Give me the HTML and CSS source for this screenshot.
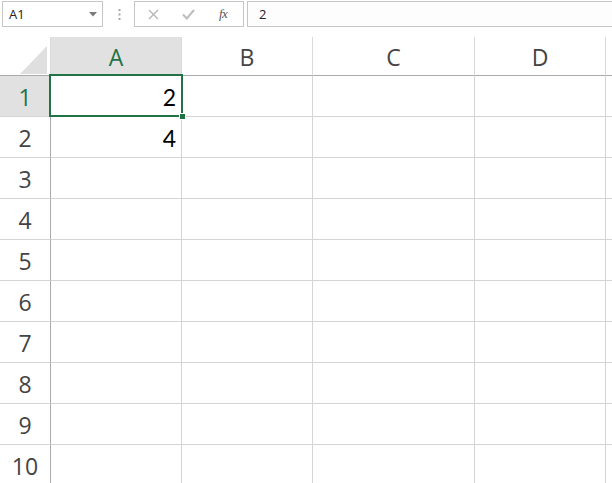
FILE: index.html
```html
<!DOCTYPE html>
<html>
<head>
<meta charset="utf-8">
<link rel="stylesheet" href="styles.css">
</head>
<body>
<div class="app">
  <div class="toolbar">
    <div class="namebox">
      <span class="name">A1</span>
      <svg class="caret" width="8" height="5" viewBox="0 0 8 5"><path d="M0 0H8L4 4.5Z" fill="#7a7a7a"/></svg>
    </div>
    <div class="grip">
      <svg width="3" height="11" viewBox="0 0 3 11"><rect x="0.5" y="0" width="2" height="2" fill="#a6a6a6"/><rect x="0.5" y="4.5" width="2" height="2" fill="#a6a6a6"/><rect x="0.5" y="9" width="2" height="2" fill="#a6a6a6"/></svg>
    </div>
    <div class="fbuttons">
      <svg class="btn" width="11" height="11" viewBox="0 0 11 11"><path d="M1 1L10 10M10 1L1 10" stroke="#b4b4b4" stroke-width="1.3" fill="none"/></svg>
      <svg class="btn" width="13" height="11" viewBox="0 0 13 11"><path d="M1 5.5L4.8 9.5L12 1" stroke="#bdbdbd" stroke-width="2" fill="none"/></svg>
      <span class="fx">fx</span>
    </div>
    <div class="formula">2</div>
  </div>
  <div class="sheet">
    <div class="corner">
      <svg width="28" height="30" viewBox="0 0 28 30"><path d="M0 30L27 30L27 2Z" fill="#dfdfdf"/></svg>
    </div>
    <div class="colhead active">A</div>
    <div class="colhead">B</div>
    <div class="colhead">C</div>
    <div class="colhead">D</div>
    <div class="colhead last"></div>

    <div class="rowhead active">1</div><div class="cell num">2</div><div class="cell"></div><div class="cell"></div><div class="cell"></div><div class="cell"></div>
    <div class="rowhead">2</div><div class="cell num">4</div><div class="cell"></div><div class="cell"></div><div class="cell"></div><div class="cell"></div>
    <div class="rowhead">3</div><div class="cell"></div><div class="cell"></div><div class="cell"></div><div class="cell"></div><div class="cell"></div>
    <div class="rowhead">4</div><div class="cell"></div><div class="cell"></div><div class="cell"></div><div class="cell"></div><div class="cell"></div>
    <div class="rowhead">5</div><div class="cell"></div><div class="cell"></div><div class="cell"></div><div class="cell"></div><div class="cell"></div>
    <div class="rowhead">6</div><div class="cell"></div><div class="cell"></div><div class="cell"></div><div class="cell"></div><div class="cell"></div>
    <div class="rowhead">7</div><div class="cell"></div><div class="cell"></div><div class="cell"></div><div class="cell"></div><div class="cell"></div>
    <div class="rowhead">8</div><div class="cell"></div><div class="cell"></div><div class="cell"></div><div class="cell"></div><div class="cell"></div>
    <div class="rowhead">9</div><div class="cell"></div><div class="cell"></div><div class="cell"></div><div class="cell"></div><div class="cell"></div>
    <div class="rowhead">10</div><div class="cell"></div><div class="cell"></div><div class="cell"></div><div class="cell"></div><div class="cell"></div>

    <div class="selection"><div class="handle"></div></div>
  </div>
</div>
</body>
</html>
```

FILE: styles.css
```css
* { box-sizing: border-box; }
html, body { margin: 0; padding: 0; background: #ffffff; }
body { width: 612px; height: 483px; overflow: hidden; font-family: "Open Sans", "Noto Sans", sans-serif; }

.app { display: flex; flex-direction: column; width: 612px; height: 483px; }

.toolbar { display: flex; align-items: flex-start; height: 37px; padding-top: 1px; background: #ffffff; flex: none; }

.namebox { width: 101px; height: 26px; margin-left: 2px; border: 1px solid #c6c6c6; display: flex; align-items: center; justify-content: space-between; padding: 0 5px 0 6px; background: #fff; }
.name { font-size: 13px; color: #222; line-height: 1; }
.caret { margin-top: 1px; }

.grip { width: 31px; height: 26px; display: flex; align-items: center; justify-content: center; padding-left: 1px; }

.fbuttons { width: 110px; height: 26px; border: 1px solid #c6c6c6; display: flex; align-items: center; padding-left: 13px; background: #fff; }
.fbuttons .btn:first-child { margin-right: 23px; }
.fbuttons .btn:nth-child(2) { margin-right: 24px; }
.fx { font-family: "Liberation Serif", serif; font-style: italic; font-size: 13px; color: #555; letter-spacing: -0.5px; }

.formula { flex: 1; height: 26px; margin-left: 3px; border: 1px solid #c6c6c6; border-right: none; font-size: 13px; color: #222; padding-left: 11px; line-height: 24px; background: #fdfdfd; }

.sheet { position: relative; display: grid; grid-template-columns: 51px 131px 131px 162px 131px 1fr; grid-template-rows: 39px repeat(10, 41px); flex: none; }

.corner { border-right: 1px solid #dadada; border-bottom: 1px solid #ababab; display: flex; align-items: flex-end; justify-content: flex-end; padding: 0 2px 1px 0; background: #fff; }
.corner svg { display: block; }

.colhead { border-right: 1px solid #dadada; border-bottom: 1px solid #ababab; font-size: 23px; color: #444; display: flex; align-items: center; justify-content: center; padding-top: 1px; background: #fff; }
.colhead.active { background: #e1e1e1; color: #217346; }
.colhead.last { border-right: none; }

.rowhead { border-right: 1px solid #ababab; border-bottom: 1px solid #d4d4d4; font-size: 23px; color: #444; display: flex; align-items: center; justify-content: center; padding-top: 1px; background: #fff; }
.rowhead.active { background: #e1e1e1; color: #217346; }

.cell { border-right: 1px solid #d4d4d4; border-bottom: 1px solid #d4d4d4; background: #fff; }
.cell:nth-child(6n) { border-right: none; }
.cell.num { font-family: "Lato", "Carlito", sans-serif; font-size: 23px; color: #000; display: flex; align-items: center; justify-content: flex-end; padding-right: 5px; padding-top: 2px; }

.selection { position: absolute; left: 49px; top: 37px; width: 134px; height: 43px; border: 2px solid #217346; pointer-events: none; }
.handle { position: absolute; right: -5px; bottom: -5px; width: 7px; height: 7px; background: #217346; border: 1px solid #fff; }
```
